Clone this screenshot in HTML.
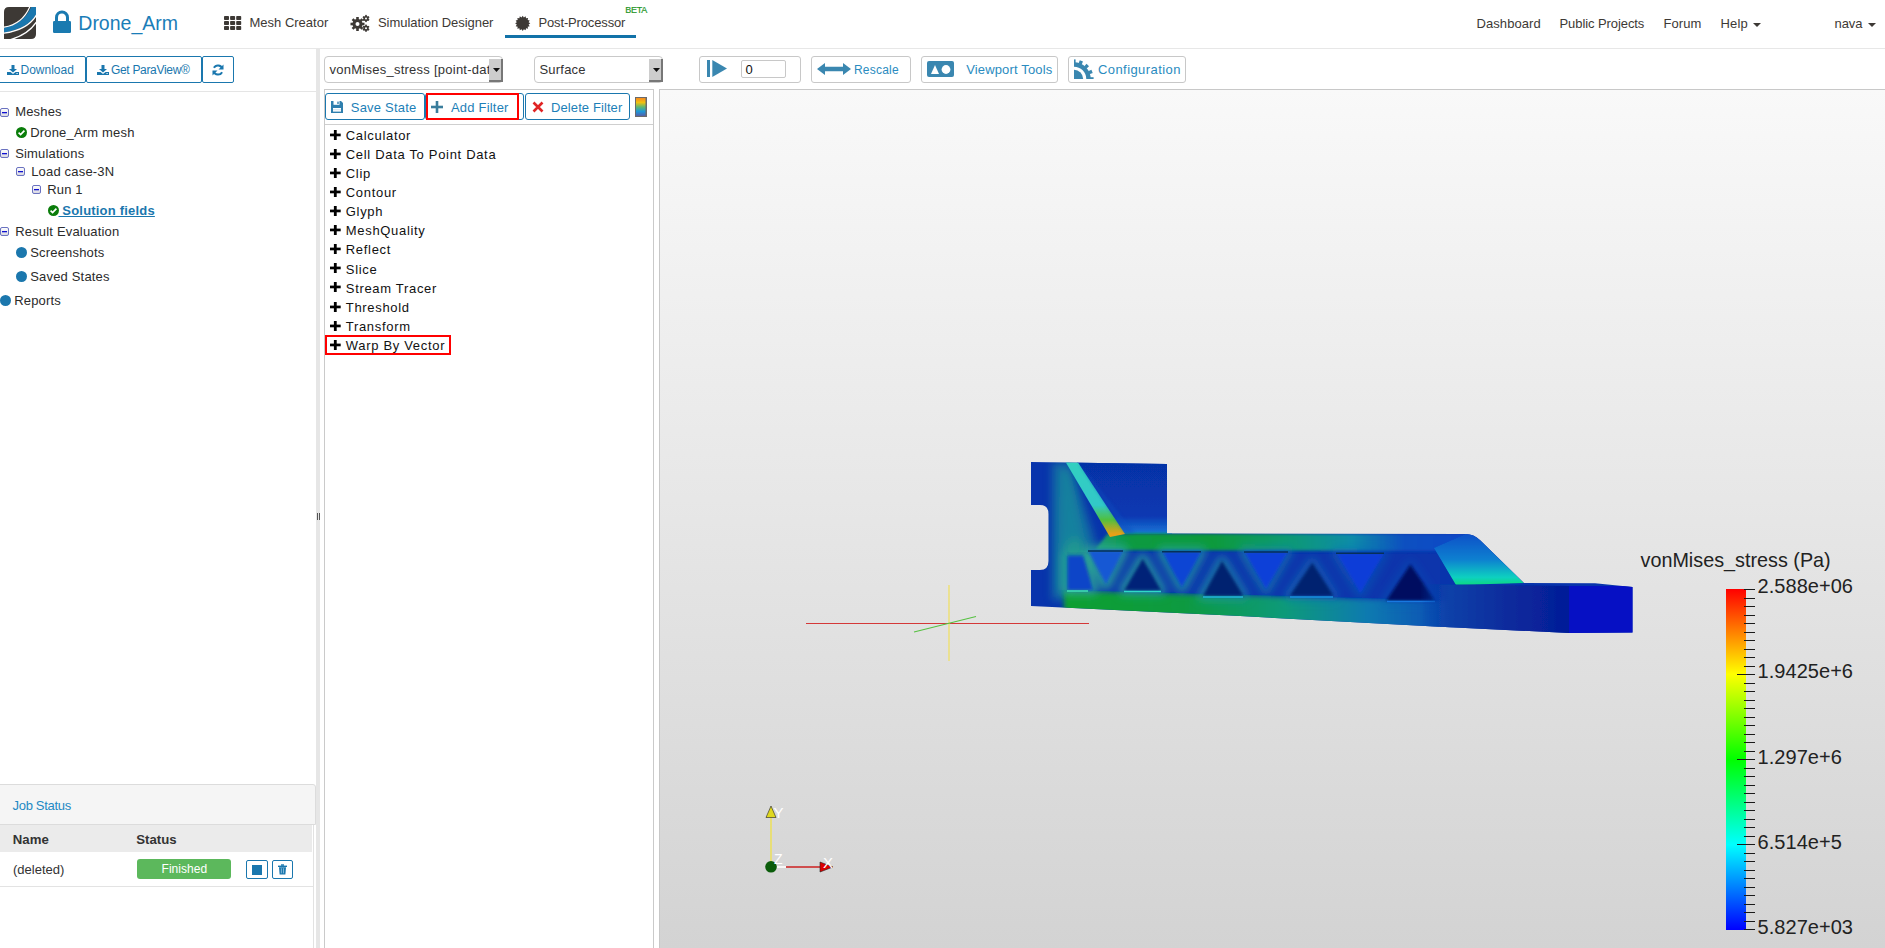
<!DOCTYPE html>
<html><head><meta charset="utf-8"><title>Drone_Arm</title>
<style>
html,body{margin:0;padding:0;width:1885px;height:948px;overflow:hidden;background:#fff;}
body{position:relative;font-family:"Liberation Sans",sans-serif;}
.t{white-space:pre;line-height:1;}
svg{position:absolute;overflow:visible;}
</style></head><body>
<div style="position:absolute;left:0px;top:48px;width:1885px;height:1px;background:#e7e7e7;"></div>
<svg style="left:4px;top:7px" width="32" height="32" viewBox="0 0 32 32">
<defs><clipPath id="lg"><path d="M5 0H32V27Q32 32 27 32H0V5Q0 0 5 0Z"/></clipPath></defs>
<g clip-path="url(#lg)">
<rect width="32" height="32" fill="#3d3935"/>
<path d="M28 -2 Q20 18 -2 21 L-2 26 Q26 22 34 4 L34 -2Z" fill="#1a77ae"/>
<path d="M26.5 -2 Q19 18 -2 20.5" stroke="#fff" stroke-width="1.2" fill="none"/>
<path d="M34 5 Q26 23 -2 26.5" stroke="#fff" stroke-width="1.2" fill="none"/>
<path d="M34 12.5 Q25 28.5 3 33.5" stroke="#fff" stroke-width="1.2" fill="none"/>
</g></svg>
<svg style="left:53px;top:11px" width="18" height="22" viewBox="0 0 18 22">
<path d="M3.5 10V6.5A5.5 5.5 0 0 1 14.5 6.5V10" stroke="#1a7ab0" stroke-width="3" fill="none"/>
<rect x="0" y="10" width="18" height="12" rx="1.2" fill="#1a7ab0"/>
</svg>
<div class="t" style="position:absolute;left:78.3px;top:14.29px;font-size:19.5px;color:#1a7db8;">Drone_Arm</div>
<svg style="left:224px;top:16px" width="18" height="15" viewBox="0 0 18 15"><rect x="0.0" y="0.0" width="5" height="4" rx="0.8" fill="#3d3935"/><rect x="6.1" y="0.0" width="5" height="4" rx="0.8" fill="#3d3935"/><rect x="12.2" y="0.0" width="5" height="4" rx="0.8" fill="#3d3935"/><rect x="0.0" y="5.0" width="5" height="4" rx="0.8" fill="#3d3935"/><rect x="6.1" y="5.0" width="5" height="4" rx="0.8" fill="#3d3935"/><rect x="12.2" y="5.0" width="5" height="4" rx="0.8" fill="#3d3935"/><rect x="0.0" y="10.0" width="5" height="4" rx="0.8" fill="#3d3935"/><rect x="6.1" y="10.0" width="5" height="4" rx="0.8" fill="#3d3935"/><rect x="12.2" y="10.0" width="5" height="4" rx="0.8" fill="#3d3935"/></svg>
<div class="t" style="position:absolute;left:249.5px;top:16.00px;font-size:13px;color:#3d3935;">Mesh Creator</div>
<svg style="left:351px;top:15px" width="19" height="17" viewBox="0 0 19 17">
<g fill="#3d3935">
<circle cx="6.5" cy="9" r="5"/>
<g transform="translate(6.5 9)">
<rect x="-1.3" y="-7" width="2.6" height="14"/><rect x="-1.3" y="-7" width="2.6" height="14" transform="rotate(45)"/>
<rect x="-1.3" y="-7" width="2.6" height="14" transform="rotate(90)"/><rect x="-1.3" y="-7" width="2.6" height="14" transform="rotate(135)"/>
</g>
<g transform="translate(15 3.5)"><circle r="2.6"/><rect x="-0.8" y="-3.6" width="1.6" height="7.2"/><rect x="-0.8" y="-3.6" width="1.6" height="7.2" transform="rotate(60)"/><rect x="-0.8" y="-3.6" width="1.6" height="7.2" transform="rotate(120)"/></g>
<g transform="translate(15 13.2)"><circle r="2.6"/><rect x="-0.8" y="-3.6" width="1.6" height="7.2"/><rect x="-0.8" y="-3.6" width="1.6" height="7.2" transform="rotate(60)"/><rect x="-0.8" y="-3.6" width="1.6" height="7.2" transform="rotate(120)"/></g>
</g>
<circle cx="6.5" cy="9" r="2" fill="#fff"/><circle cx="15" cy="3.5" r="1" fill="#fff"/><circle cx="15" cy="13.2" r="1" fill="#fff"/>
</svg>
<div class="t" style="position:absolute;left:378px;top:16.00px;font-size:13px;color:#3d3935;letter-spacing:-0.05px;">Simulation Designer</div>
<svg style="left:515px;top:16px" width="16" height="15" viewBox="0 0 16 15"><polygon points="15.30,7.30 13.58,8.47 14.72,10.21 12.69,10.63 13.07,12.67 11.03,12.29 10.61,14.32 8.87,13.18 7.70,14.90 6.53,13.18 4.79,14.32 4.37,12.29 2.33,12.67 2.71,10.63 0.68,10.21 1.82,8.47 0.10,7.30 1.82,6.13 0.68,4.39 2.71,3.97 2.33,1.93 4.37,2.31 4.79,0.28 6.53,1.42 7.70,-0.30 8.87,1.42 10.61,0.28 11.03,2.31 13.07,1.93 12.69,3.97 14.72,4.39 13.58,6.13" fill="#3d3935"/></svg>
<div class="t" style="position:absolute;left:538.5px;top:16.00px;font-size:13px;color:#3d3935;letter-spacing:-0.15px;">Post-Processor</div>
<div style="position:absolute;left:505px;top:35px;width:131px;height:3px;background:#1272a8;"></div>
<div class="t" style="position:absolute;left:625.3px;top:5.58px;font-size:9px;color:#1f961f;letter-spacing:-0.3px;-webkit-text-stroke:0.2px #1f961f;">BETA</div>
<div class="t" style="position:absolute;left:1476.5px;top:17.00px;font-size:13px;color:#3d3935;letter-spacing:0.08px;">Dashboard</div>
<div class="t" style="position:absolute;left:1559.5px;top:17.00px;font-size:13px;color:#3d3935;letter-spacing:-0.08px;">Public Projects</div>
<div class="t" style="position:absolute;left:1663.5px;top:17.00px;font-size:13px;color:#3d3935;letter-spacing:0.05px;">Forum</div>
<div class="t" style="position:absolute;left:1720.5px;top:17.00px;font-size:13px;color:#3d3935;letter-spacing:0.2px;">Help</div>
<svg style="left:1753px;top:23px" width="8" height="4" viewBox="0 0 8 4"><path d="M0 0H8L4 4Z" fill="#3d3935"/></svg>
<div class="t" style="position:absolute;left:1834.5px;top:17.00px;font-size:13px;color:#3d3935;letter-spacing:-0.05px;">nava</div>
<svg style="left:1868px;top:23px" width="8" height="4" viewBox="0 0 8 4"><path d="M0 0H8L4 4Z" fill="#3d3935"/></svg>
<div style="position:absolute;left:-3px;top:56px;width:89px;height:27px;box-sizing:border-box;border:1px solid #1a77ae;border-radius:2px;background:#fff;"></div>
<div style="position:absolute;left:86px;top:56px;width:116px;height:27px;box-sizing:border-box;border:1px solid #1a77ae;border-radius:2px;background:#fff;"></div>
<div style="position:absolute;left:202px;top:56px;width:32px;height:27px;box-sizing:border-box;border:1px solid #1a77ae;border-radius:2px;background:#fff;"></div>
<svg style="left:7px;top:65px" width="12" height="10" viewBox="0 0 12 10"><path d="M4.5 0H7.5V4H10L6 7.5L2 4H4.5Z" fill="#1a77ae"/><path d="M0 7H3.5L6 9L8.5 7H12V10H0Z" fill="#1a77ae"/><rect x="9.5" y="8" width="1.2" height="1" fill="#fff"/></svg>
<div class="t" style="position:absolute;left:20.5px;top:63.84px;font-size:12px;color:#1a77ae;">Download</div>
<svg style="left:97px;top:65px" width="12" height="10" viewBox="0 0 12 10"><path d="M4.5 0H7.5V4H10L6 7.5L2 4H4.5Z" fill="#1a77ae"/><path d="M0 7H3.5L6 9L8.5 7H12V10H0Z" fill="#1a77ae"/><rect x="9.5" y="8" width="1.2" height="1" fill="#fff"/></svg>
<div class="t" style="position:absolute;left:111px;top:63.84px;font-size:12px;color:#1a77ae;letter-spacing:-0.32px;">Get ParaView®</div>
<svg style="left:212px;top:64px" width="12" height="12" viewBox="0 0 12 12">
<path d="M10.3 4.5A4.6 4.6 0 0 0 1.9 3.8" stroke="#1a77ae" stroke-width="2" fill="none"/>
<path d="M11.5 0.5V5.5H6.5Z" fill="#1a77ae"/>
<path d="M1.7 7.5A4.6 4.6 0 0 0 10.1 8.2" stroke="#1a77ae" stroke-width="2" fill="none"/>
<path d="M0.5 11.5V6.5H5.5Z" fill="#1a77ae"/>
</svg>
<div style="position:absolute;left:0px;top:91px;width:316px;height:1px;background:#e5e5e5;"></div>
<svg style="left:0px;top:108px" width="9" height="9" viewBox="0 0 9 9"><defs><linearGradient id="mg0108" x1="0" y1="0" x2="0" y2="1"><stop offset="0" stop-color="#fff"/><stop offset="1" stop-color="#d8d8e0"/></linearGradient></defs><rect x="0.5" y="0.5" width="8" height="8" rx="1.5" fill="url(#mg0108)" stroke="#6a72c0"/><rect x="2" y="4" width="5" height="1.3" fill="#1010d0"/></svg>
<div class="t" style="position:absolute;left:15.2px;top:105.00px;font-size:13px;color:#2b2b2b;letter-spacing:0.18px;">Meshes</div>
<svg style="left:16px;top:127px" width="11" height="11" viewBox="0 0 11 11"><circle cx="5.5" cy="5.5" r="5.5" fill="#0a7d0a"/><path d="M2.6 5.6L4.6 7.5L8.4 3.6" stroke="#fff" stroke-width="1.7" fill="none"/></svg>
<div class="t" style="position:absolute;left:30.2px;top:126.00px;font-size:13px;color:#2b2b2b;letter-spacing:0.18px;">Drone_Arm mesh</div>
<svg style="left:0px;top:149px" width="9" height="9" viewBox="0 0 9 9"><defs><linearGradient id="mg0149" x1="0" y1="0" x2="0" y2="1"><stop offset="0" stop-color="#fff"/><stop offset="1" stop-color="#d8d8e0"/></linearGradient></defs><rect x="0.5" y="0.5" width="8" height="8" rx="1.5" fill="url(#mg0149)" stroke="#6a72c0"/><rect x="2" y="4" width="5" height="1.3" fill="#1010d0"/></svg>
<div class="t" style="position:absolute;left:15.2px;top:147.00px;font-size:13px;color:#2b2b2b;letter-spacing:0.18px;">Simulations</div>
<svg style="left:16px;top:167px" width="9" height="9" viewBox="0 0 9 9"><defs><linearGradient id="mg16167" x1="0" y1="0" x2="0" y2="1"><stop offset="0" stop-color="#fff"/><stop offset="1" stop-color="#d8d8e0"/></linearGradient></defs><rect x="0.5" y="0.5" width="8" height="8" rx="1.5" fill="url(#mg16167)" stroke="#6a72c0"/><rect x="2" y="4" width="5" height="1.3" fill="#1010d0"/></svg>
<div class="t" style="position:absolute;left:31.2px;top:165.00px;font-size:13px;color:#2b2b2b;letter-spacing:0.18px;">Load case-3N</div>
<svg style="left:32px;top:185px" width="9" height="9" viewBox="0 0 9 9"><defs><linearGradient id="mg32185" x1="0" y1="0" x2="0" y2="1"><stop offset="0" stop-color="#fff"/><stop offset="1" stop-color="#d8d8e0"/></linearGradient></defs><rect x="0.5" y="0.5" width="8" height="8" rx="1.5" fill="url(#mg32185)" stroke="#6a72c0"/><rect x="2" y="4" width="5" height="1.3" fill="#1010d0"/></svg>
<div class="t" style="position:absolute;left:47.2px;top:183.00px;font-size:13px;color:#2b2b2b;letter-spacing:0.18px;">Run 1</div>
<svg style="left:48px;top:205px" width="11" height="11" viewBox="0 0 11 11"><circle cx="5.5" cy="5.5" r="5.5" fill="#0a7d0a"/><path d="M2.6 5.6L4.6 7.5L8.4 3.6" stroke="#fff" stroke-width="1.7" fill="none"/></svg>
<div class="t" style="position:absolute;left:58.5px;top:203.50px;font-size:13px;color:#1a77ae;font-weight:700;letter-spacing:0.2px;text-decoration:underline;"> Solution fields</div>
<svg style="left:0px;top:227px" width="9" height="9" viewBox="0 0 9 9"><defs><linearGradient id="mg0227" x1="0" y1="0" x2="0" y2="1"><stop offset="0" stop-color="#fff"/><stop offset="1" stop-color="#d8d8e0"/></linearGradient></defs><rect x="0.5" y="0.5" width="8" height="8" rx="1.5" fill="url(#mg0227)" stroke="#6a72c0"/><rect x="2" y="4" width="5" height="1.3" fill="#1010d0"/></svg>
<div class="t" style="position:absolute;left:15.2px;top:225.00px;font-size:13px;color:#2b2b2b;letter-spacing:0.18px;">Result Evaluation</div>
<svg style="left:16px;top:247px" width="11" height="11" viewBox="0 0 11 11"><circle cx="5.5" cy="5.5" r="5.5" fill="#1b77ad"/></svg>
<div class="t" style="position:absolute;left:30.2px;top:246.00px;font-size:13px;color:#2b2b2b;letter-spacing:0.18px;">Screenshots</div>
<svg style="left:16px;top:271px" width="11" height="11" viewBox="0 0 11 11"><circle cx="5.5" cy="5.5" r="5.5" fill="#1b77ad"/></svg>
<div class="t" style="position:absolute;left:30.2px;top:270.00px;font-size:13px;color:#2b2b2b;letter-spacing:0.18px;">Saved States</div>
<svg style="left:0px;top:295px" width="11" height="11" viewBox="0 0 11 11"><circle cx="5.5" cy="5.5" r="5.5" fill="#1b77ad"/></svg>
<div class="t" style="position:absolute;left:14.2px;top:294.00px;font-size:13px;color:#2b2b2b;letter-spacing:0.18px;">Reports</div>
<div style="position:absolute;left:-5px;top:784px;width:321px;height:41px;box-sizing:border-box;border:1px solid #dcdcdc;border-top-right-radius:3px;background:#f5f5f5;"></div>
<div style="position:absolute;left:0px;top:825px;width:312px;height:27px;background:#ebebeb;"></div>
<div style="position:absolute;left:313px;top:825px;width:1px;height:123px;background:#e2e2e2;"></div>
<div style="position:absolute;left:0px;top:886px;width:313px;height:1px;background:#e3e3e3;"></div>
<div class="t" style="position:absolute;left:12.5px;top:799.00px;font-size:13px;color:#2389c4;letter-spacing:-0.3px;">Job Status</div>
<div class="t" style="position:absolute;left:12.8px;top:832.83px;font-size:13.2px;color:#333;font-weight:700;">Name</div>
<div class="t" style="position:absolute;left:136.3px;top:832.83px;font-size:13.2px;color:#333;font-weight:700;">Status</div>
<div class="t" style="position:absolute;left:13px;top:863.00px;font-size:13px;color:#333;">(deleted)</div>
<div style="position:absolute;left:137px;top:859px;width:94px;height:20px;background:#5cb85c;border-radius:3px;"></div>
<div class="t" style="position:absolute;left:161.5px;top:862.84px;font-size:12px;color:#fff;letter-spacing:0.05px;">Finished</div>
<div style="position:absolute;left:246px;top:860px;width:22px;height:19px;box-sizing:border-box;border:1px solid #1a77ae;border-radius:2px;"></div>
<div style="position:absolute;left:252px;top:865px;width:10px;height:10px;background:#1a77ae;"></div>
<div style="position:absolute;left:272px;top:860px;width:21px;height:19px;box-sizing:border-box;border:1px solid #1a77ae;border-radius:2px;"></div>
<svg style="left:277px;top:864px" width="11" height="11" viewBox="0 0 11 11"><rect x="1" y="1.6" width="9" height="1.4" fill="#1a77ae"/><rect x="4" y="0.3" width="3" height="1.5" fill="#1a77ae"/><path d="M2 3.3H9L8.4 10.5H2.6Z" fill="#1a77ae"/><rect x="3.9" y="4.3" width="0.8" height="5" fill="#9cc6e0"/><rect x="6.2" y="4.3" width="0.8" height="5" fill="#9cc6e0"/></svg>
<div style="position:absolute;left:316px;top:49px;width:4px;height:899px;background:#e6e6e6;"></div>
<div style="position:absolute;left:317px;top:513px;width:1px;height:7px;background:#555;"></div>
<div style="position:absolute;left:319px;top:513px;width:1px;height:7px;background:#555;"></div>
<div style="position:absolute;left:324px;top:56px;width:179px;height:27px;box-sizing:border-box;border:1px solid #c9c9c9;border-radius:4px;background:#fff;"></div>
<div class="t" style="position:absolute;left:329.5px;top:63.00px;font-size:13px;color:#333;letter-spacing:0.25px;">vonMises_stress [point-dat</div>
<div style="position:absolute;left:488.5px;top:59px;width:14px;height:23px;box-sizing:border-box;background:#cdcdcd;border-right:2px solid #777;border-bottom:2px solid #777;"></div>
<svg style="left:492.5px;top:68px" width="7" height="4" viewBox="0 0 7 4"><path d="M0 0H7L3.5 4Z" fill="#111"/></svg>
<div style="position:absolute;left:534px;top:56px;width:129px;height:27px;box-sizing:border-box;border:1px solid #c9c9c9;border-radius:4px;background:#fff;"></div>
<div class="t" style="position:absolute;left:539.5px;top:63.00px;font-size:13px;color:#333;letter-spacing:0.2px;">Surface</div>
<div style="position:absolute;left:648.5px;top:59px;width:14px;height:23px;box-sizing:border-box;background:#cdcdcd;border-right:2px solid #777;border-bottom:2px solid #777;"></div>
<svg style="left:652.5px;top:68px" width="7" height="4" viewBox="0 0 7 4"><path d="M0 0H7L3.5 4Z" fill="#111"/></svg>
<div style="position:absolute;left:324px;top:89px;width:330px;height:859px;box-sizing:border-box;border:1px solid #cacaca;border-bottom:none;background:#fff;"></div>
<div style="position:absolute;left:325px;top:124px;width:328px;height:1px;background:#cfcfcf;"></div>
<div style="position:absolute;left:325px;top:93px;width:100px;height:27px;box-sizing:border-box;border:1px solid #1a77ae;border-radius:3px;background:#fff;"></div>
<div style="position:absolute;left:425px;top:93px;width:99px;height:27px;box-sizing:border-box;border:1px solid #1a77ae;border-radius:3px;background:#fff;"></div>
<div style="position:absolute;left:525px;top:93px;width:105px;height:27px;box-sizing:border-box;border:1px solid #1a77ae;border-radius:3px;background:#fff;"></div>
<div style="position:absolute;left:426px;top:93px;width:93px;height:27px;box-sizing:border-box;border:2px solid #f00;"></div>
<svg style="left:331px;top:101px" width="12" height="12" viewBox="0 0 12 12"><path d="M0 0H10L12 2V12H0Z" fill="#2f7fae"/><rect x="2.5" y="0" width="6" height="3.8" fill="#fff"/><rect x="6.3" y="0.6" width="1.4" height="2.4" fill="#2f7fae"/><rect x="2" y="7" width="8" height="3.6" fill="#fff"/><rect x="2" y="8.4" width="8" height="0.8" fill="#c9dbe8"/></svg>
<div class="t" style="position:absolute;left:350.8px;top:101.00px;font-size:13px;color:#1d7fb8;letter-spacing:0.2px;">Save State</div>
<svg style="left:431px;top:101px" width="12" height="12" viewBox="0 0 12 12"><rect x="4.7" y="0" width="2.6" height="12" fill="#3a7d9c"/><rect x="0" y="4.7" width="12" height="2.6" fill="#3a7d9c"/></svg>
<div class="t" style="position:absolute;left:451px;top:101.00px;font-size:13px;color:#1d7fb8;letter-spacing:0.2px;">Add Filter</div>
<svg style="left:532px;top:101px" width="12" height="12" viewBox="0 0 12 12"><path d="M1.5 1.5L10.5 10.5M10.5 1.5L1.5 10.5" stroke="#e02424" stroke-width="2.6"/></svg>
<div class="t" style="position:absolute;left:551px;top:101.00px;font-size:13px;color:#1d7fb8;letter-spacing:0.1px;">Delete Filter</div>
<svg style="left:635px;top:97px" width="12" height="20" viewBox="0 0 12 20"><defs><linearGradient id="cm" x1="0" y1="0" x2="0" y2="1">
<stop offset="0" stop-color="#f78a1e"/><stop offset="0.25" stop-color="#f2c10e"/><stop offset="0.5" stop-color="#5fb870"/><stop offset="0.75" stop-color="#1e96d8"/><stop offset="1" stop-color="#5560a8"/></linearGradient></defs>
<rect x="0" y="0" width="12" height="20" fill="#6a6a6a"/><rect x="1" y="1" width="9.5" height="18" fill="url(#cm)"/></svg>
<svg style="left:330px;top:130px" width="11" height="10" viewBox="0 0 11 10"><rect x="3.9" y="0" width="2.8" height="10" fill="#000"/><rect x="0" y="3.6" width="10.7" height="2.7" fill="#000"/></svg>
<div class="t" style="position:absolute;left:345.8px;top:128.90px;font-size:13px;color:#111;letter-spacing:0.68px;">Calculator</div>
<svg style="left:330px;top:149px" width="11" height="10" viewBox="0 0 11 10"><rect x="3.9" y="0" width="2.8" height="10" fill="#000"/><rect x="0" y="3.6" width="10.7" height="2.7" fill="#000"/></svg>
<div class="t" style="position:absolute;left:345.8px;top:148.00px;font-size:13px;color:#111;letter-spacing:0.68px;">Cell Data To Point Data</div>
<svg style="left:330px;top:168px" width="11" height="10" viewBox="0 0 11 10"><rect x="3.9" y="0" width="2.8" height="10" fill="#000"/><rect x="0" y="3.6" width="10.7" height="2.7" fill="#000"/></svg>
<div class="t" style="position:absolute;left:345.8px;top:167.10px;font-size:13px;color:#111;letter-spacing:0.68px;">Clip</div>
<svg style="left:330px;top:187px" width="11" height="10" viewBox="0 0 11 10"><rect x="3.9" y="0" width="2.8" height="10" fill="#000"/><rect x="0" y="3.6" width="10.7" height="2.7" fill="#000"/></svg>
<div class="t" style="position:absolute;left:345.8px;top:186.20px;font-size:13px;color:#111;letter-spacing:0.68px;">Contour</div>
<svg style="left:330px;top:206px" width="11" height="10" viewBox="0 0 11 10"><rect x="3.9" y="0" width="2.8" height="10" fill="#000"/><rect x="0" y="3.6" width="10.7" height="2.7" fill="#000"/></svg>
<div class="t" style="position:absolute;left:345.8px;top:205.30px;font-size:13px;color:#111;letter-spacing:0.68px;">Glyph</div>
<svg style="left:330px;top:225px" width="11" height="10" viewBox="0 0 11 10"><rect x="3.9" y="0" width="2.8" height="10" fill="#000"/><rect x="0" y="3.6" width="10.7" height="2.7" fill="#000"/></svg>
<div class="t" style="position:absolute;left:345.8px;top:224.40px;font-size:13px;color:#111;letter-spacing:0.68px;">MeshQuality</div>
<svg style="left:330px;top:244px" width="11" height="10" viewBox="0 0 11 10"><rect x="3.9" y="0" width="2.8" height="10" fill="#000"/><rect x="0" y="3.6" width="10.7" height="2.7" fill="#000"/></svg>
<div class="t" style="position:absolute;left:345.8px;top:243.40px;font-size:13px;color:#111;letter-spacing:0.68px;">Reflect</div>
<svg style="left:330px;top:263px" width="11" height="10" viewBox="0 0 11 10"><rect x="3.9" y="0" width="2.8" height="10" fill="#000"/><rect x="0" y="3.6" width="10.7" height="2.7" fill="#000"/></svg>
<div class="t" style="position:absolute;left:345.8px;top:262.50px;font-size:13px;color:#111;letter-spacing:0.68px;">Slice</div>
<svg style="left:330px;top:282px" width="11" height="10" viewBox="0 0 11 10"><rect x="3.9" y="0" width="2.8" height="10" fill="#000"/><rect x="0" y="3.6" width="10.7" height="2.7" fill="#000"/></svg>
<div class="t" style="position:absolute;left:345.8px;top:281.60px;font-size:13px;color:#111;letter-spacing:0.68px;">Stream Tracer</div>
<svg style="left:330px;top:302px" width="11" height="10" viewBox="0 0 11 10"><rect x="3.9" y="0" width="2.8" height="10" fill="#000"/><rect x="0" y="3.6" width="10.7" height="2.7" fill="#000"/></svg>
<div class="t" style="position:absolute;left:345.8px;top:300.70px;font-size:13px;color:#111;letter-spacing:0.68px;">Threshold</div>
<svg style="left:330px;top:321px" width="11" height="10" viewBox="0 0 11 10"><rect x="3.9" y="0" width="2.8" height="10" fill="#000"/><rect x="0" y="3.6" width="10.7" height="2.7" fill="#000"/></svg>
<div class="t" style="position:absolute;left:345.8px;top:319.80px;font-size:13px;color:#111;letter-spacing:0.68px;">Transform</div>
<svg style="left:330px;top:340px" width="11" height="10" viewBox="0 0 11 10"><rect x="3.9" y="0" width="2.8" height="10" fill="#000"/><rect x="0" y="3.6" width="10.7" height="2.7" fill="#000"/></svg>
<div class="t" style="position:absolute;left:345.8px;top:338.90px;font-size:13px;color:#111;letter-spacing:0.68px;">Warp By Vector</div>
<div style="position:absolute;left:325px;top:335px;width:126px;height:20px;box-sizing:border-box;border:2px solid #f00;"></div>
<div style="position:absolute;left:699px;top:56px;width:102px;height:27px;box-sizing:border-box;border:1px solid #c8c8c8;border-radius:3px;background:#fff;"></div>
<svg style="left:707px;top:60px" width="20" height="17" viewBox="0 0 20 17"><rect x="0" y="0" width="3" height="17" fill="#3a87b0"/><path d="M5.3 0L20 8.5L5.3 17Z" fill="#3a87b0"/></svg>
<div style="position:absolute;left:741px;top:60px;width:45px;height:18px;box-sizing:border-box;border:1px solid #c8c8c8;border-radius:2px;"></div>
<div class="t" style="position:absolute;left:745.5px;top:63.00px;font-size:13px;color:#111;">0</div>
<div style="position:absolute;left:811px;top:56px;width:100px;height:27px;box-sizing:border-box;border:1px solid #c8c8c8;border-radius:3px;background:#fff;"></div>
<svg style="left:817px;top:63px" width="34" height="12" viewBox="0 0 34 12"><path d="M0 6L8 0V3.8H26V0L34 6L26 12V8.2H8V12Z" fill="#3a87b0"/></svg>
<div class="t" style="position:absolute;left:854px;top:63.84px;font-size:12px;color:#2a8bc0;letter-spacing:0.2px;">Rescale</div>
<div style="position:absolute;left:921px;top:56px;width:137px;height:27px;box-sizing:border-box;border:1px solid #c8c8c8;border-radius:3px;background:#fff;"></div>
<svg style="left:927px;top:61px" width="27" height="16" viewBox="0 0 27 16"><rect width="27" height="16" rx="2" fill="#3a87b0"/><path d="M4 13L8 4L12 13Z" fill="#fff"/><circle cx="19" cy="8.5" r="4.4" fill="#fff"/></svg>
<div class="t" style="position:absolute;left:966.2px;top:63.00px;font-size:13px;color:#2a8bc0;letter-spacing:0.15px;">Viewport Tools</div>
<div style="position:absolute;left:1068px;top:56px;width:118px;height:27px;box-sizing:border-box;border:1px solid #c8c8c8;border-radius:3px;background:#fff;"></div>
<svg style="left:1074px;top:59px;overflow:hidden" width="20" height="20" viewBox="0 0 20 20"><g fill="#3a87b0">
<path d="M0 20V10.8A9.2 9.2 0 0 1 9.2 20Z"/>
<path d="M0 3.3A16.7 16.7 0 0 1 16.7 20H12.3A12.3 12.3 0 0 0 0 7.7Z"/>
<g transform="translate(0 20)">
<rect x="-1.8" y="-19.6" width="3.4" height="3.6" transform="rotate(0)"/>
<rect x="-1.8" y="-19.6" width="3.4" height="3.6" transform="rotate(22.5)"/>
<rect x="-1.8" y="-19.6" width="3.4" height="3.6" transform="rotate(45)"/>
<rect x="-1.8" y="-19.6" width="3.4" height="3.6" transform="rotate(67.5)"/>
<rect x="-1.8" y="-19.6" width="3.4" height="3.6" transform="rotate(90)"/>
</g></g></svg>
<div class="t" style="position:absolute;left:1098px;top:63.00px;font-size:13px;color:#2a8bc0;letter-spacing:0.42px;">Configuration</div>
<div style="position:absolute;left:659px;top:89px;width:1226px;height:859px;box-sizing:border-box;border-top:1px solid #c8c8c8;border-left:1px solid #c8c8c8;background:linear-gradient(#f9f9f9 0%, #e8e8e8 45%, #d3d3d3 100%);"></div>
<svg style="left:0;top:0" width="1885" height="948" viewBox="0 0 1885 948">
<defs>
<clipPath id="sil"><path d="M1031 462L1167 464L1167 533.5L1466 534Q1474 534 1480 540L1524 583L1595 583.3L1632.5 587L1632.5 632.5L1569 633L1430 626.3L1240 616L1031 606L1031 570L1040 570Q1048.5 570 1048.5 561L1048.5 514Q1048.5 505 1040 505L1031 505Z"/></clipPath>
<filter id="bl4" x="-30%" y="-30%" width="160%" height="160%"><feGaussianBlur stdDeviation="4"/></filter>
<filter id="bl3" x="-30%" y="-30%" width="160%" height="160%"><feGaussianBlur stdDeviation="2.5"/></filter>
<filter id="bl2" x="-30%" y="-30%" width="160%" height="160%"><feGaussianBlur stdDeviation="1.5"/></filter>
<filter id="bl1" x="-30%" y="-30%" width="160%" height="160%"><feGaussianBlur stdDeviation="0.7"/></filter>
<linearGradient id="topch" x1="1100" y1="0" x2="1470" y2="0" gradientUnits="userSpaceOnUse">
<stop offset="0" stop-color="#1a9a70"/><stop offset="0.08" stop-color="#0a9a40"/><stop offset="0.3" stop-color="#0a9a3a"/><stop offset="0.5" stop-color="#0a9a70"/><stop offset="0.68" stop-color="#0a8ca8"/><stop offset="0.82" stop-color="#0a50c0"/><stop offset="1" stop-color="#0a48c8"/></linearGradient>
<linearGradient id="botch" x1="1060" y1="0" x2="1470" y2="0" gradientUnits="userSpaceOnUse">
<stop offset="0" stop-color="#10a030"/><stop offset="0.3" stop-color="#0a9a40"/><stop offset="0.55" stop-color="#0a9a7a"/><stop offset="0.75" stop-color="#0a7ab0"/><stop offset="1" stop-color="#0a40b8"/></linearGradient>
<linearGradient id="upblk" x1="0" y1="462" x2="0" y2="534" gradientUnits="userSpaceOnUse">
<stop offset="0" stop-color="#0632a6"/><stop offset="0.75" stop-color="#0838b2"/><stop offset="1" stop-color="#1a78d8"/></linearGradient>
<linearGradient id="slope" x1="0" y1="534" x2="0" y2="585" gradientUnits="userSpaceOnUse">
<stop offset="0" stop-color="#0a50c8"/><stop offset="0.5" stop-color="#0a80d0"/><stop offset="0.85" stop-color="#10d0c0"/><stop offset="1" stop-color="#10d880"/></linearGradient>
<linearGradient id="lowr" x1="1420" y1="0" x2="1570" y2="0" gradientUnits="userSpaceOnUse">
<stop offset="0" stop-color="#0a40a8" stop-opacity="0"/><stop offset="0.2" stop-color="#0a40a8" stop-opacity="1"/><stop offset="0.6" stop-color="#0a2a9c"/><stop offset="1" stop-color="#041c98"/></linearGradient>
<linearGradient id="strut" x1="0" y1="462" x2="0" y2="534" gradientUnits="userSpaceOnUse">
<stop offset="0" stop-color="#30d0c0"/><stop offset="0.6" stop-color="#30c8c8"/><stop offset="0.8" stop-color="#50c040"/><stop offset="1" stop-color="#e8a018"/></linearGradient>
<linearGradient id="zig" x1="1060" y1="0" x2="1460" y2="0" gradientUnits="userSpaceOnUse">
<stop offset="0" stop-color="#20a090" stop-opacity="0.9"/><stop offset="0.4" stop-color="#1a8a98" stop-opacity="0.6"/><stop offset="1" stop-color="#0a50b8" stop-opacity="0"/></linearGradient>
<linearGradient id="halo" x1="1060" y1="0" x2="1450" y2="0" gradientUnits="userSpaceOnUse">
<stop offset="0" stop-color="#30b090" stop-opacity="0.9"/><stop offset="0.35" stop-color="#20a0a0" stop-opacity="0.7"/><stop offset="0.7" stop-color="#1070b8" stop-opacity="0.5"/><stop offset="1" stop-color="#0a50b8" stop-opacity="0.2"/></linearGradient>
</defs>
<g clip-path="url(#sil)">
<rect x="1025" y="455" width="615" height="185" fill="#0834ac"/>
<path d="M1074 458L1172 458L1172 534L1122 534Z" fill="url(#upblk)" filter="url(#bl1)"/>
<!-- left block teal field -->
<g filter="url(#bl4)" opacity="0.6">
<path d="M1052 462L1070 462L1095 540L1070 600L1052 600Z" fill="#1a8ca0"/>
</g>
<!-- chords (blurred) -->
<path d="M1108 533.5L1470 534L1470 551L1095 550Z" fill="url(#topch)" filter="url(#bl2)"/>
<path d="M1064 591L1450 601L1450 632L1064 615Z" fill="url(#botch)" filter="url(#bl3)"/>
<!-- truss inner base -->
<path d="M1067 552L1440 554L1440 600L1067 590Z" fill="#0834ac" filter="url(#bl1)"/>
<!-- halo fuzz around holes -->
<g filter="url(#bl4)" fill="none" stroke="url(#halo)" stroke-width="10" stroke-linejoin="round">
<path d="M1067.5 555.5L1083 555.5L1093 590L1067.5 590Z"/>
<path d="M1088 550.6L1123.5 550.6L1106 584.8Z"/>
<path d="M1162 551.3L1201.6 551.3L1181.8 587.7Z"/>
<path d="M1244 551.6L1288.2 551.6L1266 589.6Z"/>
<path d="M1336.3 552.9L1384.4 552.9L1360.4 593.4Z"/>
<path d="M1142.7 558.5L1161.4 590.6L1124 590.6Z"/>
<path d="M1222 560.8L1243.7 595.9L1202.8 595.9Z"/>
<path d="M1312.3 562.4L1333.8 596L1289.5 596Z"/>
<path d="M1410.4 564.3L1435.1 600.4L1386.3 600.4Z"/>
</g>
<g filter="url(#bl4)">
<ellipse cx="1075" cy="548" rx="10" ry="10" fill="#20a080" opacity="0.7"/>
<path d="M1060 470L1070 470L1085 540L1068 590L1058 590Z" fill="#1a9a98" opacity="0.5"/>
</g>
<!-- strut -->
<path d="M1065 461L1077 461L1125 534L1110 537Z" fill="url(#strut)" filter="url(#bl1)"/>
<path d="M1085 470L1077 461L1125 534L1135 533Z" fill="#0a50c0" opacity="0.4" filter="url(#bl2)"/>
<!-- holes -->
<g filter="url(#bl2)">
<path d="M1067.5 555.5L1083 555.5L1093 590L1067.5 590Z" fill="#0a44c8"/>
<path d="M1088 550.6L1123.5 550.6L1106 584.8Z" fill="#1258d4"/>
<path d="M1162 551.3L1201.6 551.3L1181.8 587.7Z" fill="#0a44d4"/>
<path d="M1244 551.6L1288.2 551.6L1266 589.6Z" fill="#0a40d8"/>
<path d="M1336.3 552.9L1384.4 552.9L1360.4 593.4Z" fill="#0a3ed8"/>
<path d="M1142.7 558.5L1161.4 590.6L1124 590.6Z" fill="#062478"/>
<path d="M1222 560.8L1243.7 595.9L1202.8 595.9Z" fill="#052070"/>
<path d="M1312.3 562.4L1333.8 596L1289.5 596Z" fill="#052070"/>
<path d="M1410.4 564.3L1435.1 600.4L1386.3 600.4Z" fill="#021060"/>
</g>
<g stroke-width="1.6">
<line x1="1088" y1="551" x2="1123" y2="551" stroke="#063058"/>
<line x1="1162" y1="551.8" x2="1201" y2="551.8" stroke="#063058"/>
<line x1="1244" y1="552" x2="1288" y2="552" stroke="#063058"/>
<line x1="1336" y1="553.3" x2="1384" y2="553.3" stroke="#063058"/>
<line x1="1067" y1="591" x2="1088" y2="591" stroke="#40e0b0"/>
<line x1="1124" y1="591.5" x2="1161" y2="591.5" stroke="#30d8c8"/>
<line x1="1203" y1="597" x2="1243" y2="597" stroke="#20b8d8"/>
<line x1="1290" y1="597" x2="1333" y2="597" stroke="#1890e0"/>
<line x1="1387" y1="601.5" x2="1435" y2="601.5" stroke="#1878e0"/>
</g>
<!-- right slope face -->
<path d="M1434 548L1466 534Q1474 534 1480 540L1524 583L1456 585Z" fill="url(#slope)" filter="url(#bl1)"/>
<path d="M1420 584L1570 586L1570 634L1416 628Z" fill="url(#lowr)" filter="url(#bl1)"/>
<rect x="1569" y="586" width="66" height="50" fill="#0610c4"/>
</g>
</svg>

<div class="t" style="position:absolute;left:1640.5px;top:551.24px;font-size:19.8px;color:#222;letter-spacing:0.0px;">vonMises_stress (Pa)</div>
<svg style="left:1720px;top:580px" width="60" height="360" viewBox="1720 580 60 360"><defs><linearGradient id="jet" x1="0" y1="0" x2="0" y2="1"><stop offset="0" stop-color="#ff0000"/><stop offset="0.25" stop-color="#ffff00"/><stop offset="0.5" stop-color="#00ff00"/><stop offset="0.75" stop-color="#00ffff"/><stop offset="1" stop-color="#0000ff"/></linearGradient></defs><rect x="1726" y="589" width="20" height="341" fill="url(#jet)"/><rect x="1744" y="589" width="11" height="1" fill="#1a1a1a"/><rect x="1744" y="598" width="11" height="1" fill="#1a1a1a"/><rect x="1744" y="606" width="11" height="1" fill="#1a1a1a"/><rect x="1744" y="615" width="11" height="1" fill="#1a1a1a"/><rect x="1744" y="623" width="11" height="1" fill="#1a1a1a"/><rect x="1744" y="632" width="11" height="1" fill="#1a1a1a"/><rect x="1744" y="640" width="11" height="1" fill="#1a1a1a"/><rect x="1744" y="649" width="11" height="1" fill="#1a1a1a"/><rect x="1744" y="657" width="11" height="1" fill="#1a1a1a"/><rect x="1744" y="666" width="11" height="1" fill="#1a1a1a"/><rect x="1737" y="674" width="18" height="1" fill="#1a1a1a"/><rect x="1744" y="683" width="11" height="1" fill="#1a1a1a"/><rect x="1744" y="691" width="11" height="1" fill="#1a1a1a"/><rect x="1744" y="700" width="11" height="1" fill="#1a1a1a"/><rect x="1744" y="708" width="11" height="1" fill="#1a1a1a"/><rect x="1744" y="717" width="11" height="1" fill="#1a1a1a"/><rect x="1744" y="725" width="11" height="1" fill="#1a1a1a"/><rect x="1744" y="734" width="11" height="1" fill="#1a1a1a"/><rect x="1744" y="742" width="11" height="1" fill="#1a1a1a"/><rect x="1744" y="751" width="11" height="1" fill="#1a1a1a"/><rect x="1737" y="759" width="18" height="1" fill="#1a1a1a"/><rect x="1744" y="768" width="11" height="1" fill="#1a1a1a"/><rect x="1744" y="776" width="11" height="1" fill="#1a1a1a"/><rect x="1744" y="785" width="11" height="1" fill="#1a1a1a"/><rect x="1744" y="793" width="11" height="1" fill="#1a1a1a"/><rect x="1744" y="802" width="11" height="1" fill="#1a1a1a"/><rect x="1744" y="810" width="11" height="1" fill="#1a1a1a"/><rect x="1744" y="819" width="11" height="1" fill="#1a1a1a"/><rect x="1744" y="827" width="11" height="1" fill="#1a1a1a"/><rect x="1744" y="836" width="11" height="1" fill="#1a1a1a"/><rect x="1737" y="844" width="18" height="1" fill="#1a1a1a"/><rect x="1744" y="853" width="11" height="1" fill="#1a1a1a"/><rect x="1744" y="861" width="11" height="1" fill="#1a1a1a"/><rect x="1744" y="870" width="11" height="1" fill="#1a1a1a"/><rect x="1744" y="878" width="11" height="1" fill="#1a1a1a"/><rect x="1744" y="887" width="11" height="1" fill="#1a1a1a"/><rect x="1744" y="895" width="11" height="1" fill="#1a1a1a"/><rect x="1744" y="904" width="11" height="1" fill="#1a1a1a"/><rect x="1744" y="912" width="11" height="1" fill="#1a1a1a"/><rect x="1744" y="921" width="11" height="1" fill="#1a1a1a"/><rect x="1744" y="929" width="11" height="1" fill="#1a1a1a"/></svg>
<div class="t" style="position:absolute;left:1757.5px;top:575.57px;font-size:20px;color:#222;letter-spacing:0.05px;">2.588e+06</div>
<div class="t" style="position:absolute;left:1757.5px;top:661.07px;font-size:20px;color:#222;letter-spacing:0.05px;">1.9425e+6</div>
<div class="t" style="position:absolute;left:1757.5px;top:747.07px;font-size:20px;color:#222;letter-spacing:0.05px;">1.297e+6</div>
<div class="t" style="position:absolute;left:1757.5px;top:832.07px;font-size:20px;color:#222;letter-spacing:0.05px;">6.514e+5</div>
<div class="t" style="position:absolute;left:1757.5px;top:917.07px;font-size:20px;color:#222;letter-spacing:0.05px;">5.827e+03</div>
<svg style="left:0;top:0" width="1885" height="948" viewBox="0 0 1885 948"><line x1="806" y1="623.5" x2="1089" y2="623.5" stroke="#d43838" stroke-width="1.2"/><line x1="949" y1="585" x2="949" y2="661" stroke="#eee070" stroke-width="1.4"/><line x1="914" y1="632" x2="976" y2="616.5" stroke="#55c040" stroke-width="1.2"/><line x1="771" y1="817" x2="771" y2="862" stroke="#ece060" stroke-width="1.6"/><path d="M771 806L766 817.5H776Z" fill="#e0d820" stroke="#222" stroke-width="0.6"/><line x1="777" y1="867" x2="786" y2="867" stroke="#fff" stroke-width="1.6"/><line x1="786" y1="867" x2="820" y2="867" stroke="#cc2020" stroke-width="1.6"/><path d="M833 867L820 862V872Z" fill="#dd0000" stroke="#222" stroke-width="0.6"/><circle cx="771" cy="866.8" r="5.8" fill="#0a5c0a"/></svg>
<div class="t" style="position:absolute;left:773.5px;top:804.80px;font-size:15px;color:#fff;font-weight:300;">Y</div>
<div class="t" style="position:absolute;left:774px;top:852.15px;font-size:14px;color:#fff;">Z</div>
<div class="t" style="position:absolute;left:823px;top:855.30px;font-size:15px;color:#fff;">X</div>
</body></html>
